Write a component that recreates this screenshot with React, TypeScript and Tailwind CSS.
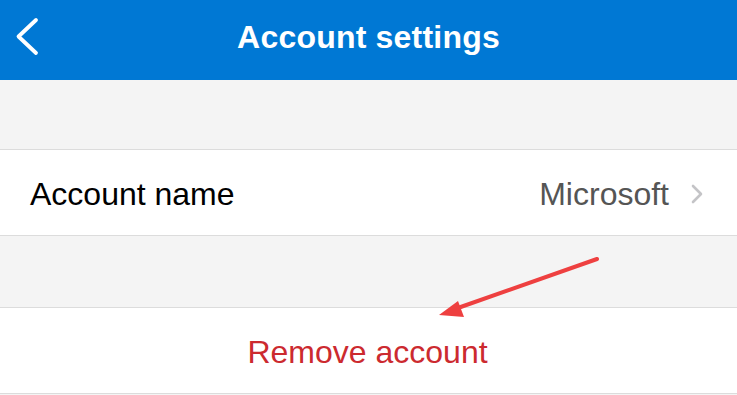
import React from "react";

const FONT = { fontFamily: '"Liberation Sans", Arial, sans-serif' };

function BackIcon() {
  return (
    <svg width="50" height="70" viewBox="0 0 50 70" fill="none">
      <path
        d="M36 20 L18.5 36.5 L36 53"
        stroke="white"
        strokeWidth="3.8"
        strokeLinecap="round"
        strokeLinejoin="round"
      />
    </svg>
  );
}

function Chevron() {
  return (
    <svg width="14" height="20" viewBox="0 0 14 20" fill="none">
      <path
        d="M3 2 L11 10 L3 18"
        stroke="#c4c4c7"
        strokeWidth="2.6"
        strokeLinecap="round"
        strokeLinejoin="round"
      />
    </svg>
  );
}

export default function App() {
  return (
    <div className="relative w-[737px] h-[395px] overflow-hidden bg-[#f4f4f4]" style={FONT}>
      {/* Header */}
      <header className="h-[80px] bg-[#0078d4] flex items-center relative">
        <div className="absolute left-0 top-0">
          <BackIcon />
        </div>
        <h1 className="w-full text-center text-white font-bold text-[32px] tracking-[0.2px] leading-none -mt-[7px]">
          Account settings
        </h1>
      </header>

      <div className="h-[69px]" />

      {/* Account name row */}
      <div className="h-[87px] bg-white border-y border-[#dcdcdc] flex items-center justify-between pl-[30px] pr-[33px]">
        <span className="text-[32px] text-black leading-none mt-[3px]">Account name</span>
        <div className="flex items-center gap-[21px] mt-[3px]">
          <span className="text-[32px] text-[#555555] leading-none">Microsoft</span>
          <Chevron />
        </div>
      </div>

      <div className="h-[71px]" />

      {/* Remove account row */}
      <div className="h-[87px] bg-white border-y border-[#dcdcdc] flex items-center justify-center">
        <span className="text-[32px] text-[#cc2a2f] leading-none mt-[2px] -ml-[2px]">Remove account</span>
      </div>

      {/* Annotation arrow */}
      <svg
        className="absolute inset-0 pointer-events-none"
        width="737"
        height="395"
        viewBox="0 0 737 395"
      >
        <line x1="597" y1="259" x2="455" y2="309" stroke="#ee4040" strokeWidth="4" strokeLinecap="round" />
        <polygon points="439,315 458,301 464,317" fill="#ee4040" />
      </svg>
    </div>
  );
}
